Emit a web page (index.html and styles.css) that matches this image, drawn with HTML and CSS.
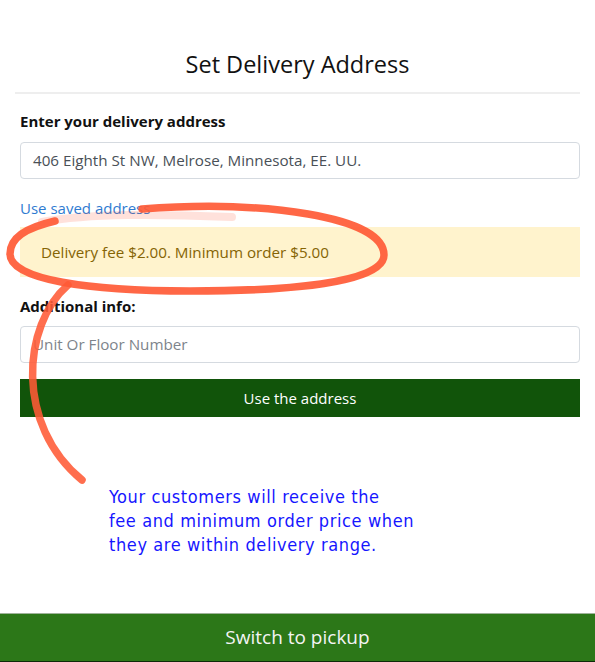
FILE: index.html
```html
<!DOCTYPE html>
<html>
<head>
<meta charset="utf-8">
<link rel="stylesheet" href="styles.css">
</head>
<body>
<div class="page">
  <header class="header">
    <h1 class="title">Set Delivery Address</h1>
    <div class="divider"></div>
  </header>
  <main class="form">
    <div class="label">Enter your delivery address</div>
    <div class="input">406 Eighth St NW, Melrose, Minnesota, EE. UU.</div>
    <a class="link">Use saved address</a>
    <div class="alert">Delivery fee $2.00. Minimum order $5.00</div>
    <div class="label label-2">Additional info:</div>
    <div class="input input-2 placeholder">Unit Or Floor Number</div>
    <div class="button">Use the address</div>
    <p class="note">Your customers will receive the<br>fee and minimum order price when<br>they are within delivery range.</p>
  </main>
  <footer class="footer">Switch to pickup</footer>
  <svg class="marks" width="595" height="662" viewBox="0 0 595 662">
    <path d="M42 222 C 90 213, 160 214, 232 217" fill="none" stroke="#ff5a36" stroke-width="8" stroke-linecap="round" opacity="0.18"/>
    <path d="M142 209 C 262 200, 384 216, 384 255 C 384 284, 280 291, 190 291 C 90 291, 10 280, 10 254 C 10 238, 25 228, 55 221" fill="none" stroke="#ff5a36" stroke-width="7.5" stroke-linecap="round" opacity="0.92"/>
    <path d="M68 285 C 22 325, 15 425, 82 480" fill="none" stroke="#ff5a36" stroke-width="7.5" stroke-linecap="round" opacity="0.88"/>
  </svg>
</div>
</body>
</html>
```

FILE: styles.css
```css
html, body {
  margin: 0;
  padding: 0;
  background: #fff;
}
.page {
  position: relative;
  width: 595px;
  height: 662px;
  display: flex;
  flex-direction: column;
  font-family: "Open Sans", "Noto Sans", sans-serif;
  color: #212529;
  overflow: hidden;
}
.header {
  padding-top: 48px;
}
.title {
  margin: 0;
  font-size: 23.5px;
  line-height: 32px;
  font-weight: 400;
  text-align: center;
  color: #111;
}
.divider {
  margin: 12px 15px 0;
  height: 2px;
  background: #eeeeee;
}
.form {
  padding: 0 15px 0 20px;
  display: flex;
  flex-direction: column;
}
.label {
  margin-top: 18px;
  font-size: 15px;
  line-height: 18px;
  font-weight: 700;
  color: #111;
}
.label-2 {
  margin-top: 19px;
  line-height: 20px;
}
.input {
  margin-top: 12px;
  height: 37px;
  box-sizing: border-box;
  border: 1px solid #d5dae0;
  border-radius: 4px;
  padding: 0 12px;
  font-size: 15.2px;
  line-height: 35px;
  color: #495057;
}
.input-2 {
  margin-top: 10px;
}
.placeholder {
  color: #7d848b;
}
.link {
  margin-top: 19px;
  font-size: 15px;
  line-height: 20px;
  color: #2f7bd1;
}
.alert {
  margin-top: 9px;
  height: 50px;
  box-sizing: border-box;
  padding: 0 21px;
  background: #fff3cd;
  color: #856404;
  font-size: 15.2px;
  line-height: 50px;
}
.button {
  margin-top: 16px;
  height: 38px;
  background: #11540a;
  color: #fff;
  text-align: center;
  font-size: 15px;
  line-height: 38px;
}
.note {
  margin: 68px 0 0 89px;
  font-family: "DejaVu Sans Condensed", "DejaVu Sans", sans-serif;
  font-size: 18px;
  line-height: 24px;
  letter-spacing: 0.6px;
  color: #1616ff;
}
.footer {
  margin-top: auto;
  height: 49px;
  box-sizing: border-box;
  border-top: 1px solid #9fb39a;
  border-bottom: 1px solid #0d2a08;
  background: #2c7718;
  color: #f4f4f4;
  text-align: center;
  font-size: 19px;
  line-height: 46px;
}
.marks {
  position: absolute;
  left: 0;
  top: 0;
  pointer-events: none;
}
```
